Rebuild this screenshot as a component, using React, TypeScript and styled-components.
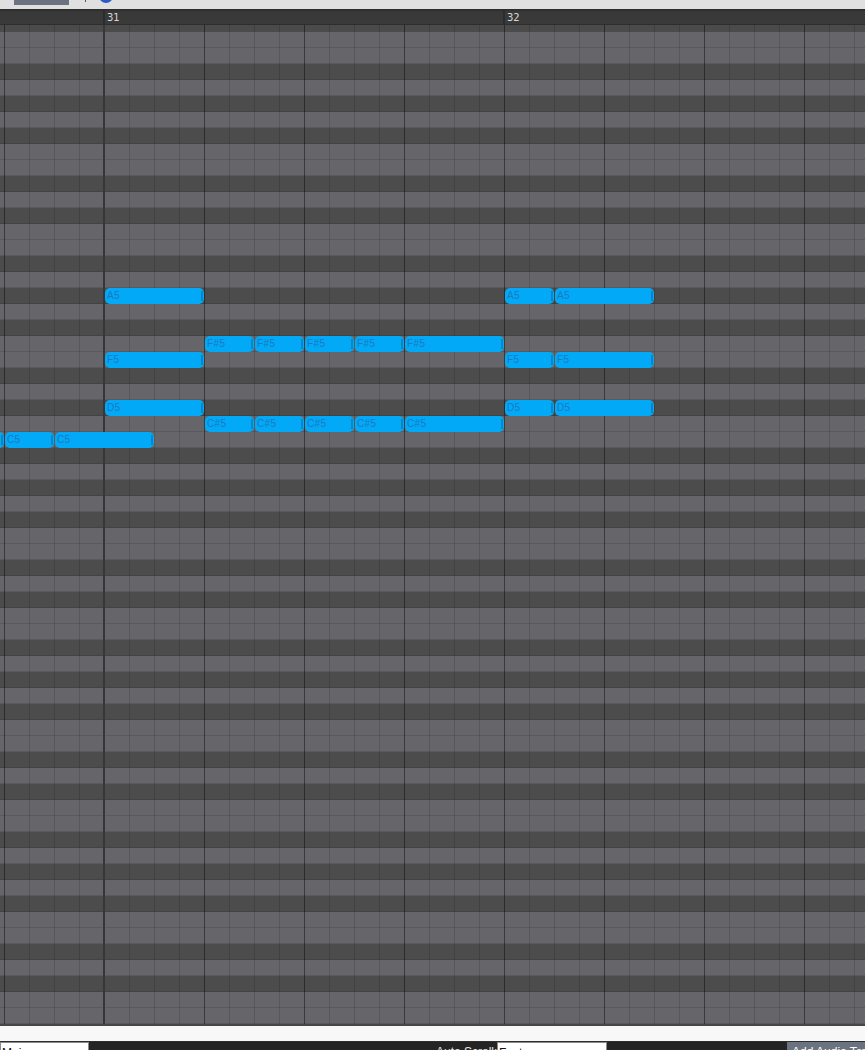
import React from "react";
import styled, { createGlobalStyle } from "styled-components";

const Global = createGlobalStyle`
  html, body { margin: 0; padding: 0; height: 1050px; overflow: hidden; background: #f8f8f8; }
  * { box-sizing: border-box; }
`;

const Page = styled.div`
  width: 865px;
  height: 1050px;
  display: flex;
  flex-direction: column;
  overflow: hidden;
  font-family: "Liberation Sans", Arial, sans-serif;
`;

const TopBar = styled.div`
  height: 9px;
  flex: none;
  display: flex;
  align-items: flex-start;
  background: #e0e0e0;
  overflow: hidden;
`;

const TabButton = styled.div`
  width: 55px;
  height: 5px;
  margin-left: 14px;
  background: #6b7280;
`;

const TickMark = styled.div`
  width: 1px;
  height: 2px;
  margin-left: 16px;
  background: #555;
`;

const BlueDot = styled.div`
  width: 14px;
  height: 14px;
  margin: -11px 0 0 13px;
  border-radius: 50%;
  background: #2a5cc4;
`;

const Ruler = styled.div`
  height: 15px;
  flex: none;
  position: relative;
  background:
    linear-gradient(90deg, #2c2c2c 0, #2c2c2c 2px, transparent 2px) 103px 0 / 400px 100% repeat-x,
    linear-gradient(180deg, #2b2b2b 0, #383838 3px, #3a3a3a 100%);
`;

const BarNumber = styled.span<{ $x: number }>`
  position: absolute;
  left: ${(p) => p.$x}px;
  top: 3px;
  font-family: "DejaVu Sans", sans-serif;
  font-size: 10px;
  line-height: 12px;
  font-weight: 400;
  color: #d8d8d8;
`;

const verticals = `
  linear-gradient(90deg, #37373a 0, #37373a 2px, transparent 2px) 103px 0 / 400px 100% repeat-y,
  linear-gradient(90deg, rgba(0,0,0,.34) 0, rgba(0,0,0,.34) 1px, transparent 1px) 4px 0 / 100px 100%,
  linear-gradient(90deg, rgba(0,0,0,.14) 0, rgba(0,0,0,.14) 1px, transparent 1px) 4px 0 / 25px 100%
`;

const SubRuler = styled.div`
  height: 8px;
  flex: none;
  border-top: 1px solid #2e2e2e;
  background: ${verticals}, #4b4b4b;
`;

const L = "#666569";
const D = "#4c4c4c";

const rowStops = `
  ${L} 0, ${L} 32px, ${D} 32px, ${D} 48px, ${L} 48px, ${L} 64px,
  ${D} 64px, ${D} 80px, ${L} 80px, ${L} 96px, ${D} 96px, ${D} 112px,
  ${L} 112px, ${L} 144px, ${D} 144px, ${D} 160px, ${L} 160px, ${L} 176px,
  ${D} 176px, ${D} 192px
`;

const Roll = styled.div`
  height: 994px;
  flex: none;
  position: relative;
  border-bottom: 2px solid #464646;
  background:
    ${verticals},
    linear-gradient(180deg, transparent 15px, rgba(0,0,0,.12) 15px, rgba(0,0,0,.12) 16px) 0 0 / 100% 16px,
    linear-gradient(180deg, ${rowStops}) 0 0 / 100% 192px;
  overflow: hidden;
`;

const Note = styled.div<{ $x: number; $y: number; $w: number }>`
  position: absolute;
  left: ${(p) => p.$x}px;
  top: ${(p) => p.$y}px;
  width: ${(p) => p.$w - 1}px;
  height: 16px;
  border-radius: 5px;
  background: #02a9f6;
  padding-left: 2px;
  font-size: 10px;
  line-height: 15px;
  letter-spacing: 0.4px;
  color: #1b78c2;
  &::after {
    content: "";
    position: absolute;
    right: 1px;
    top: 3px;
    width: 2px;
    height: 10px;
    background: #0a84c2;
  }
`;

const WhiteStrip = styled.div`
  height: 15px;
  flex: none;
  background: #f8f8f8;
`;

const Footer = styled.div`
  height: 9px;
  flex: none;
  display: flex;
  align-items: flex-start;
  overflow: hidden;
  background: #242424;
  border-top: 1px solid #2e2e2e;
  font-size: 12px;
  line-height: 15px;
  white-space: nowrap;
`;

const SelectBox = styled.div<{ $w: number }>`
  width: ${(p) => p.$w}px;
  height: 20px;
  flex: none;
  display: flex;
  justify-content: space-between;
  padding: 3px 3px 0 1px;
  background: #fff;
  border: 1px solid #8a8a8a;
  border-bottom: none;
  color: #111;
`;

const Chevron = styled.span`
  font-size: 9px;
  margin-top: 1px;
  color: #555;
`;

const AutoLabel = styled.span`
  margin-left: 347px;
  width: 61px;
  flex: none;
  padding-top: 3px;
  color: #e6e6e6;
`;

const AddTrack = styled.div`
  margin-left: auto;
  width: 78px;
  height: 20px;
  flex: none;
  padding: 3px 0 0 5px;
  overflow: hidden;
  background: #6b7280;
  color: #fff;
`;

const notes: { t: string; x: number; y: number; w: number }[] = [
  { t: "A5", x: 105, y: 256, w: 100 },
  { t: "A5", x: 505, y: 256, w: 50 },
  { t: "A5", x: 555, y: 256, w: 100 },
  { t: "F#5", x: 205, y: 304, w: 50 },
  { t: "F#5", x: 255, y: 304, w: 50 },
  { t: "F#5", x: 305, y: 304, w: 50 },
  { t: "F#5", x: 355, y: 304, w: 50 },
  { t: "F#5", x: 405, y: 304, w: 100 },
  { t: "F5", x: 105, y: 320, w: 100 },
  { t: "F5", x: 505, y: 320, w: 50 },
  { t: "F5", x: 555, y: 320, w: 100 },
  { t: "D5", x: 105, y: 368, w: 100 },
  { t: "D5", x: 505, y: 368, w: 50 },
  { t: "D5", x: 555, y: 368, w: 100 },
  { t: "C#5", x: 205, y: 384, w: 50 },
  { t: "C#5", x: 255, y: 384, w: 50 },
  { t: "C#5", x: 305, y: 384, w: 50 },
  { t: "C#5", x: 355, y: 384, w: 50 },
  { t: "C#5", x: 405, y: 384, w: 100 },
  { t: "", x: -46, y: 400, w: 51 },
  { t: "C5", x: 5, y: 400, w: 50 },
  { t: "C5", x: 55, y: 400, w: 100 },
];

export default function App() {
  return (
    <Page>
      <Global />
      <TopBar>
        <TabButton />
        <TickMark />
        <BlueDot />
      </TopBar>
      <Ruler>
        <BarNumber $x={107}>31</BarNumber>
        <BarNumber $x={507}>32</BarNumber>
      </Ruler>
      <SubRuler />
      <Roll>
        {notes.map((n, i) => (
          <Note key={i} $x={n.x} $y={n.y} $w={n.w}>
            {n.t}
          </Note>
        ))}
      </Roll>
      <WhiteStrip />
      <Footer>
        <SelectBox $w={89}>
          Main <Chevron>⌃⌄</Chevron>
        </SelectBox>
        <AutoLabel>Auto Scroll:</AutoLabel>
        <SelectBox $w={110}>
          Fast <Chevron>⌃⌄</Chevron>
        </SelectBox>
        <AddTrack>Add Audio Track</AddTrack>
      </Footer>
    </Page>
  );
}
